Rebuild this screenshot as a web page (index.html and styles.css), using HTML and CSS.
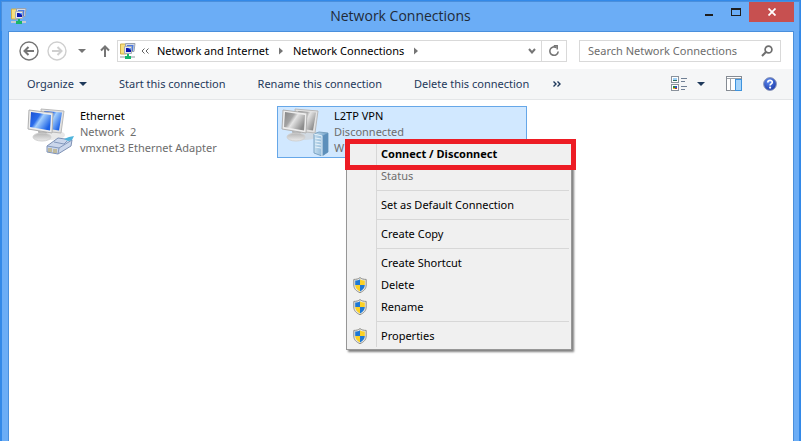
FILE: index.html
```
<!DOCTYPE html>
<html lang="en">
<head>
    <meta charset="UTF-8">
    <meta name="viewport" content="width=device-width, initial-scale=1.0">
    <title>Network Connections</title>
    <link rel="stylesheet" href="styles.css">
</head>
<body>
    <!-- shared icons -->
    <svg class="defs" aria-hidden="true">
        <defs>
            <linearGradient id="blue-screen" x1="0" y1="0" x2="1" y2="0.6">
                <stop offset="0" stop-color="#1a4fd0"/>
                <stop offset="0.4" stop-color="#2a6ceb"/>
                <stop offset="0.55" stop-color="#a4cffc"/>
                <stop offset="1" stop-color="#1c62e6"/>
            </linearGradient>
            <linearGradient id="gray-screen" x1="0" y1="0" x2="1" y2="0.6">
                <stop offset="0" stop-color="#858585"/>
                <stop offset="0.4" stop-color="#a4a4a4"/>
                <stop offset="0.55" stop-color="#e4e4e4"/>
                <stop offset="1" stop-color="#8c8c8c"/>
            </linearGradient>
            <linearGradient id="stand" x1="0" y1="0" x2="0" y2="1">
                <stop offset="0" stop-color="#b4b4b4"/>
                <stop offset="1" stop-color="#ececec"/>
            </linearGradient>
            <linearGradient id="tower" x1="0" y1="0" x2="1" y2="0">
                <stop offset="0" stop-color="#c6dff0"/>
                <stop offset="1" stop-color="#6d9fc8"/>
            </linearGradient>
            <radialGradient id="help-fill" cx="0.4" cy="0.3" r="0.8">
                <stop offset="0" stop-color="#5f8cf0"/>
                <stop offset="1" stop-color="#1432a4"/>
            </radialGradient>
            <clipPath id="shield-clip">
                <path d="M7 2.2C5.6 3.2 4 3.5 2.2 3.5V8c0 3 2 5 4.8 6.6C9.8 13 11.8 11 11.8 8V3.5C10 3.5 8.4 3.2 7 2.2z"/>
            </clipPath>
        </defs>
        <symbol id="net-icon" viewBox="0 0 16 16">
            <path d="M0.5 1h5l1 1v9h-6z" fill="#f7df7e" stroke="#cfae4a"/>
            <path d="M5.5 0.5h9.5l-1 8h-8.5z" fill="#d6dbe2" stroke="#9aa3b0"/>
            <path d="M7 2h6.5l-0.5 6H7z" fill="#4c79e0"/>
            <path d="M4.5 3.5h7v7h-7z" fill="#e6e8ec" stroke="#a6adb8"/>
            <path d="M6 5h5v4H6z" fill="#0c14b0"/>
            <path d="M8 5h3v2z" fill="#5f9cff"/>
            <path d="M0 13h15v2H0z" fill="#c7cbd0"/>
            <path d="M7 11h2v2h2v3H5v-3h2z" fill="#17b56c"/>
        </symbol>
        <symbol id="shield" viewBox="0 0 14 16">
            <path d="M7 0.6C5.4 1.9 3.4 2.4 0.8 2.4V8c0 3.8 2.4 6 6.2 7.7C10.8 14 13.2 11.8 13.2 8V2.4C10.6 2.4 8.6 1.9 7 0.6z" fill="#e8e8e4" stroke="#8e8e8a"/>
            <g clip-path="url(#shield-clip)">
                <path d="M0 0h7v8H0zM7 8h7v8H7z" fill="#1f78d4"/>
                <path d="M7 0h7v8H7zM0 8h7v8H0z" fill="#fbd125"/>
            </g>
        </symbol>
        <symbol id="caret" viewBox="0 0 8 4">
            <path d="M0 0h8L4 4z" fill="currentColor"/>
        </symbol>
        <symbol id="crumb-arrow" viewBox="0 0 4 8">
            <path d="M0 0.5L4 4 0 7.5z" fill="currentColor"/>
        </symbol>
    </svg>

    <div class="window">
        <header class="title-bar">
            <svg class="title-icon" width="16" height="16"><use href="#net-icon"/></svg>
            <h1>Network Connections</h1>
            <div class="window-buttons">
                <button class="win-btn" aria-label="Minimize">
                    <svg width="10" height="12"><path d="M1 8h8v2H1z" fill="#1e1e1e"/></svg>
                </button>
                <button class="win-btn" aria-label="Maximize">
                    <svg width="10" height="12" shape-rendering="crispEdges"><path d="M0 2h10v8H0zM1 4v5h8V4z" fill="#1e1e1e" fill-rule="evenodd"/></svg>
                </button>
                <button class="win-btn close" aria-label="Close">
                    <svg width="8" height="8"><path d="M0.5 0.5l7 7M7.5 0.5l-7 7" stroke="#fff" stroke-width="1.8"/></svg>
                </button>
            </div>
        </header>

        <div class="client">
            <nav class="nav-bar">
                <button class="round" aria-label="Back">
                    <svg width="20" height="20" fill="none" stroke="#757575"><circle cx="10" cy="10" r="9" stroke-width="1.4"/><path d="M5.5 10H15M9.5 6l-4 4 4 4" stroke-width="2"/></svg>
                </button>
                <button class="round" aria-label="Forward" disabled>
                    <svg width="20" height="20" fill="none" stroke="#cfcfcf"><circle cx="10" cy="10" r="9" stroke-width="1.4"/><path d="M5 10h9.5M10.5 6l4 4-4 4" stroke-width="2"/></svg>
                </button>
                <button class="recent" aria-label="Recent locations"><svg width="8" height="4"><use href="#caret"/></svg></button>
                <button class="up" aria-label="Up">
                    <svg width="10" height="12" fill="none" stroke="#757575" stroke-width="2"><path d="M5 12V2M1 5.5l4-4 4 4"/></svg>
                </button>
                <div class="address">
                    <svg width="16" height="16"><use href="#net-icon"/></svg>
                    <button class="more-crumbs" aria-label="More locations">
                        <svg width="8" height="6" fill="none" stroke="#606060"><path d="M3.5 0.5L1 3l2.5 2.5M7.5 0.5L5 3l2.5 2.5"/></svg>
                    </button>
                    <a href="#">Network and Internet</a>
                    <svg class="crumb" width="4" height="8"><use href="#crumb-arrow"/></svg>
                    <a href="#">Network Connections</a>
                    <svg class="crumb" width="4" height="8"><use href="#crumb-arrow"/></svg>
                    <button class="history" aria-label="Previous locations">
                        <svg width="8" height="6" fill="none" stroke="#757575" stroke-width="2"><path d="M1 1l3 3.5L7 1"/></svg>
                    </button>
                    <button class="refresh" aria-label="Refresh">
                        <svg width="12" height="12" fill="none" stroke="#757575" stroke-width="1.6"><path d="M8.5 2.7A4.2 4.2 0 1 0 10.2 6.5"/><path d="M5.8 0.8H9.2V4.6" stroke-width="1.5"/></svg>
                    </button>
                </div>
                <div class="search">
                    <input type="text" aria-label="Search" placeholder="Search Network Connections">
                    <svg width="12" height="12" fill="none" stroke="#6e6e6e"><circle cx="7.5" cy="4.5" r="3.4" stroke-width="1.7"/><path d="M5 7L1 11" stroke-width="2"/></svg>
                </div>
            </nav>

            <div class="toolbar">
                <button>Organize <svg width="8" height="4"><use href="#caret"/></svg></button>
                <button>Start this connection</button>
                <button>Rename this connection</button>
                <button>Delete this connection</button>
                <button class="overflow" aria-label="More commands">
                    <svg width="8" height="6" fill="none" stroke="#1e395b" stroke-width="1.4"><path d="M0.5 0.5L3 3 0.5 5.5M4.5 0.5L7 3 4.5 5.5"/></svg>
                </button>
                <div class="tools">
                    <button class="views" aria-label="Change your view">
                        <svg width="16" height="16" shape-rendering="crispEdges">
                            <path d="M0.5 0.5h7v6h-7zM0.5 8.5h7v6h-7z" fill="#fff" stroke="#8a929c"/>
                            <path d="M2 2h4v2H2z" fill="#9fd0f5"/><path d="M2 4h4v1H2z" fill="#286a5c"/>
                            <path d="M2 10h2v2H2z" fill="#2d8a3b"/><path d="M4 10h2v2H4z" fill="#2b52c4"/><path d="M2 12h2v1H2z" fill="#e8b52c"/><path d="M4 12h2v1H4z" fill="#c23b2c"/>
                            <path d="M10 2h6v1h-6zM10 5h4v1h-4zM10 10h6v1h-6zM10 13h4v1h-4z" fill="#6f7f94"/>
                        </svg>
                        <svg width="8" height="4"><use href="#caret"/></svg>
                    </button>
                    <button aria-label="Show the preview pane">
                        <svg width="16" height="16" shape-rendering="crispEdges">
                            <path d="M0.5 0.5h15v14h-15z" fill="#fff" stroke="#858b93"/>
                            <path d="M1 2.5h14M4.5 3v12" stroke="#9ba1a8"/>
                            <path d="M9.5 3.5h6v11h-6z" fill="#a5d4fb" stroke="#3e93dd"/>
                        </svg>
                    </button>
                    <button aria-label="Get help">
                        <svg width="14" height="14"><circle cx="7" cy="7" r="6.4" fill="url(#help-fill)" stroke="#8d98b8"/><path d="M4.8 5.5C4.8 2.6 9.4 2.8 9.3 5.3 9.2 6.9 7.2 6.8 7.1 8.5" fill="none" stroke="#fff" stroke-width="1.7"/><circle cx="7.1" cy="10.6" r="1.1" fill="#fff"/></svg>
                    </button>
                </div>
            </div>

            <main class="connections">
                <div class="connection">
                    <svg class="device" width="48" height="48">
                        <ellipse cx="24" cy="27" rx="14" ry="5" fill="#d9d9d9" opacity="0.6"/>
                        <path d="M14 1l23 2-3 22-18-2z" fill="#e2e2e2" stroke="#b9b9b9"/>
                        <path d="M17 3l18 1.5-3 18-13-2z" fill="url(#blue-screen)"/>
                        <path d="M11 23l9 1v4h-8z" fill="#adadad"/>
                        <ellipse cx="15" cy="29" rx="9" ry="4" fill="url(#stand)" stroke="#d0d0d0"/>
                        <path d="M2 2l24 3-1 20L1 21z" fill="#ededed" stroke="#b0b0b0"/>
                        <path d="M4 4l20 3-1 15.5L3 19z" fill="url(#blue-screen)"/>
                        <path d="M20 38l11-8 14 2-1 6-13 8-11-2z" fill="#cbd7ec" stroke="#7e91b4"/>
                        <path d="M20 38l12 2 13-8M32 40l-1 6M27 34l10 2 3-3" fill="none" stroke="#8398bd"/>
                        <path d="M22 40v4M24 40v4M27 41v4M29 41v4" stroke="#b49e52"/>
                        <path d="M37 31l5-2 5-1-2 4-4 1z" fill="#4fb4dc"/>
                    </svg>
                    <div class="info">
                        <h2>Ethernet</h2>
                        <p>Network&nbsp; 2</p>
                        <p>vmxnet3 Ethernet Adapter</p>
                    </div>
                </div>

                <div class="connection selected">
                    <svg class="device" width="48" height="48">
                        <ellipse cx="24" cy="27" rx="14" ry="5" fill="#d0d0d0" opacity="0.6"/>
                        <path d="M14 1l23 2-3 22-18-2z" fill="#e2e2e2" stroke="#b9b9b9"/>
                        <path d="M17 3l18 1.5-3 18-13-2z" fill="url(#gray-screen)"/>
                        <path d="M11 23l9 1v4h-8z" fill="#adadad"/>
                        <ellipse cx="15" cy="29" rx="9" ry="4" fill="url(#stand)" stroke="#d0d0d0"/>
                        <path d="M2 2l24 3-1 20L1 21z" fill="#ededed" stroke="#b0b0b0"/>
                        <path d="M4 4l20 3-1 15.5L3 19z" fill="url(#gray-screen)"/>
                        <path d="M33 26l5-2 9 1v19l-6 4-8-3z" fill="url(#tower)" stroke="#7ba3c2"/>
                        <path d="M41 28l6-3v19l-6 4z" fill="#5c8fbb"/>
                        <path d="M33 26l8 2v20M34 30l6 1M34 33l6 1M34 36l6 1M34 39l6 1" fill="none" stroke="#e7f3fb"/>
                    </svg>
                    <div class="info">
                        <h2>L2TP VPN</h2>
                        <p>Disconnected</p>
                        <p>W</p>
                    </div>

                    <div class="context-menu" role="menu">
                        <button role="menuitem" class="default">Connect / Disconnect</button>
                        <button role="menuitem" disabled>Status</button>
                        <hr>
                        <button role="menuitem">Set as Default Connection</button>
                        <hr>
                        <button role="menuitem">Create Copy</button>
                        <hr>
                        <button role="menuitem">Create Shortcut</button>
                        <button role="menuitem"><svg width="14" height="16"><use href="#shield"/></svg>Delete</button>
                        <button role="menuitem"><svg width="14" height="16"><use href="#shield"/></svg>Rename</button>
                        <hr>
                        <button role="menuitem"><svg width="14" height="16"><use href="#shield"/></svg>Properties</button>
                        <div class="highlight"></div>
                    </div>
                </div>
            </main>
        </div>
    </div>
</body>
</html>
```

FILE: styles.css
```
* {
    box-sizing: border-box;
}
body {
    margin: 0;
    font-family: "Noto Sans", "Open Sans", sans-serif;
    font-size: 11px;
    line-height: 16px;
    color: #000;
    background: #3389e8;
}
button, input {
    font: inherit;
    color: inherit;
    background: none;
    border: none;
    padding: 0;
    margin: 0;
}
button {
    display: flex;
    align-items: center;
    justify-content: center;
    white-space: nowrap;
}
svg {
    display: block;
    flex: none;
}
h1, h2, p {
    margin: 0;
    font-size: inherit;
    font-weight: normal;
}
.defs {
    position: absolute;
    width: 0;
    height: 0;
}

/* window frame */
.window {
    display: flex;
    flex-direction: column;
    min-height: 100vh;
    padding: 1px 1px 0;
}
.title-bar {
    display: grid;
    grid-template-columns: 1fr auto 1fr;
    align-items: start;
    height: 30px;
    background: #6badf6;
    border: 1px solid #4a8fdc;
    border-bottom: none;
}
.title-icon {
    margin: 6px 0 0 9px;
}
.title-bar h1 {
    font-family: "Open Sans", sans-serif;
    font-size: 14px;
    line-height: 28px;
    color: #1f2a38;
}
.window-buttons {
    display: flex;
    justify-content: flex-end;
    padding-right: 5px;
}
.win-btn {
    width: 27px;
    height: 20px;
}
.win-btn.close {
    width: 45px;
    background: #c75050;
}
.client {
    flex: 1;
    margin: 0 6px 0 7px;
    background: #fff;
    border: 1px solid #4a8fdc;
    border-bottom: none;
    box-shadow: 0 0 0 6px #6badf6;
    clip-path: inset(0 -5px 0 -6px);
}

/* address row */
.nav-bar {
    display: flex;
    align-items: center;
    height: 37px;
    padding: 0 12px 0 10px;
}
.round + .round {
    margin-left: 8px;
}
.recent {
    width: 30px;
    height: 22px;
    color: #757575;
}
.up {
    width: 16px;
    height: 22px;
    margin-right: 4px;
}
.address, .search {
    display: flex;
    align-items: center;
    height: 22px;
    border: 1px solid #d9d9d9;
}
.address {
    flex: 1;
    padding-left: 2px;
}
.address a {
    color: #000;
    text-decoration: none;
    white-space: nowrap;
}
.more-crumbs {
    width: 18px;
    height: 20px;
    margin-right: 3px;
}
.crumb {
    margin: 0 10px;
    color: #757575;
}
.history {
    width: 18px;
    height: 20px;
    margin-left: auto;
}
.refresh {
    width: 25px;
    height: 20px;
    border-left: 1px solid #d9d9d9;
}
.search {
    width: 202px;
    margin-left: 12px;
    padding: 0 7px 0 8px;
}
.search input {
    flex: 1;
    min-width: 0;
    outline: none;
}
.search input::placeholder {
    color: #6d6d6d;
    opacity: 1;
}

/* command bar */
.toolbar {
    display: flex;
    align-items: center;
    height: 31px;
    padding: 0 16px 0 2px;
    color: #1e395b;
    background: #f5f6f7;
    border-bottom: 1px solid #e4e6e8;
}
.toolbar > button {
    height: 30px;
    padding: 0 16px;
    gap: 5px;
}
.toolbar > .overflow {
    padding: 0 8px;
}
.tools {
    display: flex;
    align-items: center;
    gap: 21px;
    margin-left: auto;
}
.views {
    gap: 10px;
}

/* connection tiles */
.connections {
    display: flex;
    gap: 4px;
    padding: 6px 14px;
}
.connection {
    position: relative;
    display: flex;
    width: 250px;
    height: 52px;
    border: 1px solid transparent;
}
.connection.selected {
    background: #d1e8ff;
    border-color: #66a7e8;
}
.device {
    margin: 1px 5px 0 3px;
}
.info {
    padding-top: 1px;
    white-space: nowrap;
}
.info p {
    color: #6d6d6d;
}

/* right click menu */
.context-menu {
    position: absolute;
    left: 68px;
    top: 33px;
    width: 226px;
    padding: 2px;
    background: linear-gradient(#d7d7d7, #d7d7d7) 29px 2px / 1px calc(100% - 4px) no-repeat #f0f0f0;
    border: 1px solid #979797;
    box-shadow: 2px 2px 2px rgba(0, 0, 0, 0.5);
}
.context-menu button {
    position: relative;
    width: 100%;
    height: 22px;
    padding-left: 32px;
    justify-content: flex-start;
}
.context-menu button:disabled {
    color: #6d6d6d;
}
.context-menu .default {
    font-weight: bold;
}
.context-menu svg {
    position: absolute;
    left: 4px;
}
.context-menu hr {
    height: 1px;
    margin: 3px 0 3px 28px;
    border: none;
    background: #d7d7d7;
}
.highlight {
    position: absolute;
    inset: -2px -5px auto -2px;
    height: 31px;
    border: 5px solid #ed1c24;
}
```
